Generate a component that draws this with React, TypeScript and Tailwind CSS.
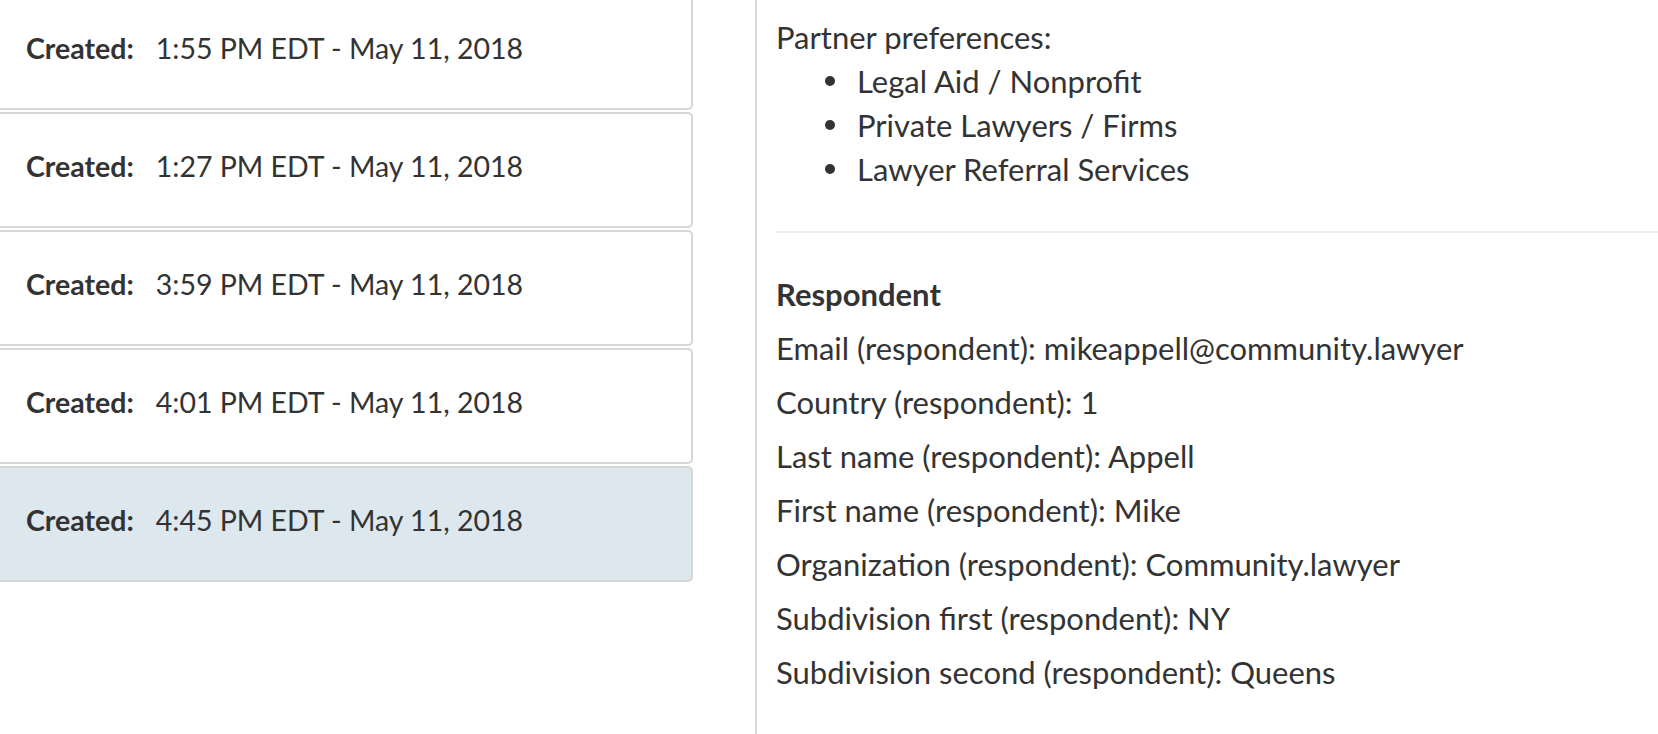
import React from 'react';

const times = ['1:55 PM EDT', '1:27 PM EDT', '3:59 PM EDT', '4:01 PM EDT', '4:45 PM EDT'];

const respondent = [
  ['Email (respondent)', 'mikeappell@community.lawyer'],
  ['Country (respondent)', '1'],
  ['Last name (respondent)', 'Appell'],
  ['First name (respondent)', 'Mike'],
  ['Organization (respondent)', 'Community.lawyer'],
  ['Subdivision first (respondent)', 'NY'],
  ['Subdivision second (respondent)', 'Queens'],
];

const partners = ['Legal Aid / Nonprofit', 'Private Lawyers / Firms', 'Lawyer Referral Services'];

export default function App() {
  return (
    <div
      className="flex h-[734px] w-[1658px] overflow-hidden bg-white text-[#333333] text-[31px]"
      style={{ fontFamily: 'Lato, "Noto Sans", sans-serif' }}
    >
      {/* submissions list */}
      <div className="ml-[-12px] mt-[-6px] flex w-[705px] shrink-0 flex-col gap-[2px]">
        {times.map((t, i) => (
          <div
            key={t}
            className={
              i === times.length - 1
                ? 'flex h-[116px] items-center rounded-[5px] border-2 border-[#d6d6d6] bg-[#dce8ee] pb-[8px] pl-[36px] text-[28.5px]'
                : 'flex h-[116px] items-center rounded-[5px] border-2 border-[#d6d6d6] bg-white pb-[8px] pl-[36px] text-[28.5px]'
            }
          >
            <span className="font-bold">Created:</span>
            <span className="ml-[22px]">{t} - May 11, 2018</span>
          </div>
        ))}
      </div>

      {/* detail panel */}
      <div className="ml-[62px] flex-1 border-l-2 border-[#d9d9d9]">
        <div className="pl-[19px] pt-[15px]">
          <div className="leading-[44px]">Partner preferences:</div>
          <ul className="pl-[49px] leading-[44px]">
            {partners.map((p) => (
              <li key={p} className="flex items-center">
                <span className="mr-[22px] h-[10px] w-[10px] rounded-full bg-[#333333]" />
                {p}
              </li>
            ))}
          </ul>
        </div>
        <div className="ml-[19px] mt-[40px] h-[2px] bg-[#eeeeee]" />
        <div className="pl-[19px] pt-[39px]">
          <div className="mb-[10px] font-bold leading-[44px]">Respondent</div>
          {respondent.map(([k, v]) => (
            <div key={k} className="mb-[10px] leading-[44px]">
              {k}: {v}
            </div>
          ))}
        </div>
      </div>
    </div>
  );
}
